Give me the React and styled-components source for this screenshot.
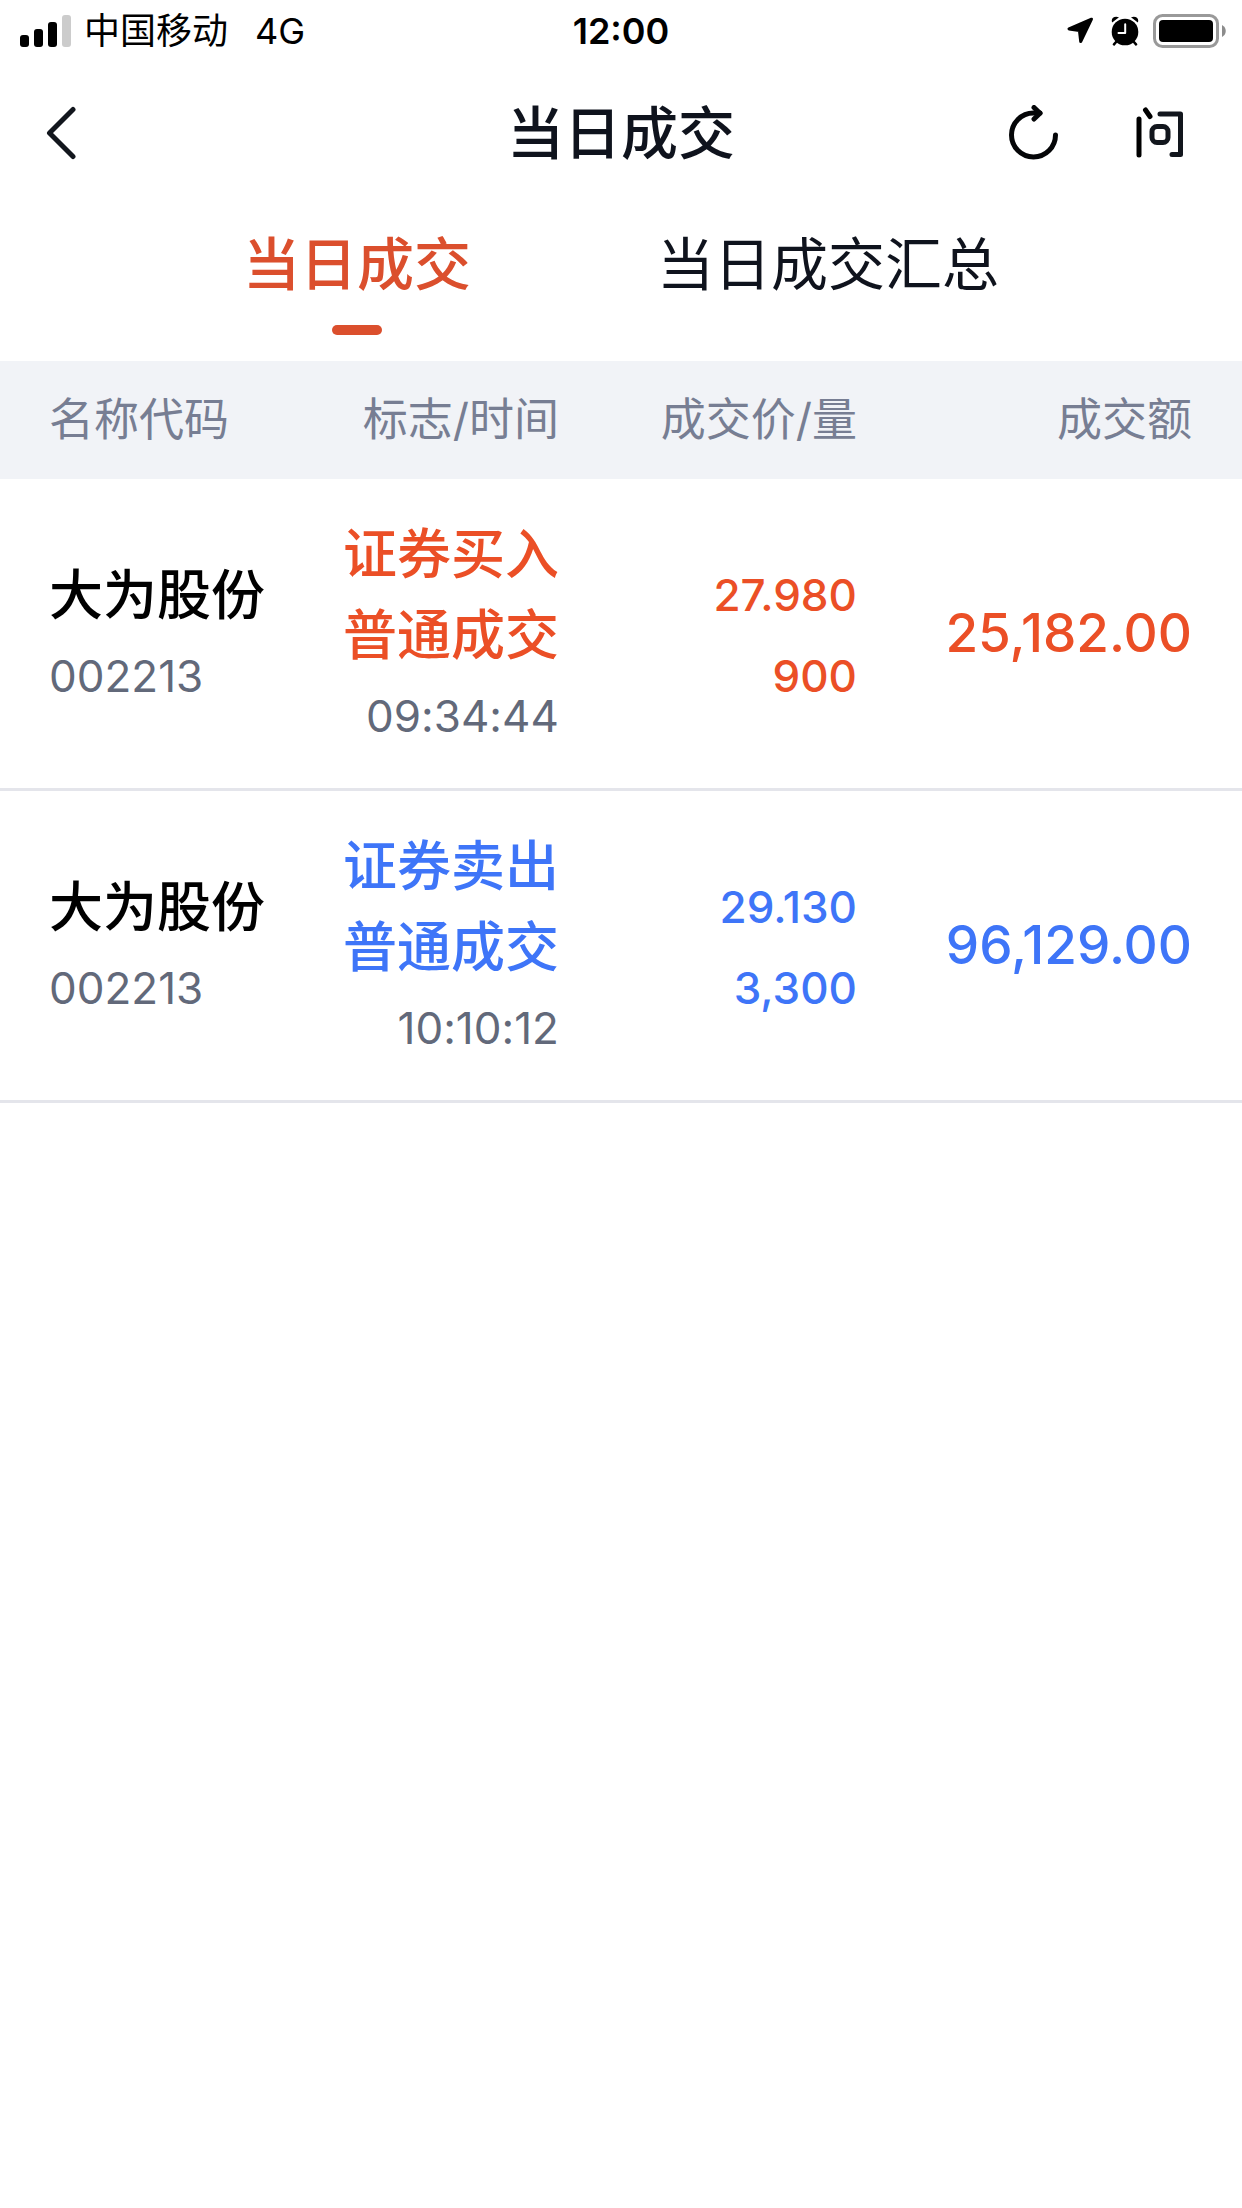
import React from "react";
import styled, { createGlobalStyle } from "styled-components";

const GlobalStyle = createGlobalStyle`
  *, *::before, *::after { box-sizing: border-box; }
  body {
    margin: 0;
    background: #fff;
    color: #0f131d;
    font-family: Inter, "Noto Sans CJK SC", sans-serif;
  }
  button {
    margin: 0;
    padding: 0;
    border: 0;
    background: none;
    color: inherit;
    font: inherit;
    cursor: pointer;
  }
  svg { display: block; }
`;

const Page = styled.div`
  min-height: 100vh;
  background: #fff;
`;

const StatusBar = styled.div`
  display: grid;
  grid-template-columns: 1fr auto 1fr;
  align-items: center;
  height: 62px;
  padding: 0 16px;
  color: #000;
  font-size: 36px;
  line-height: 62px;
`;

const StatusGroup = styled.div`
  display: flex;
  align-items: center;
  justify-content: ${(p) => (p.$end ? "flex-end" : "flex-start")};
  gap: 13px;
  padding-left: 4px;
`;

const Network = styled.span`
  margin-left: 14px;
`;

const Clock = styled.time`
  font-weight: 600;
`;

const TitleBar = styled.header`
  display: grid;
  grid-template-columns: 1fr auto 1fr;
  align-items: center;
  height: 142px;
  padding: 0 46px;
`;

const Title = styled.h1`
  margin: 0;
  padding-top: 2px;
  font-size: 57px;
  font-weight: 500;
  line-height: 84px;
`;

const Actions = styled.div`
  display: flex;
  justify-content: ${(p) => (p.$end ? "flex-end" : "flex-start")};
  gap: 77px;
  padding-right: 12px;
`;

const Tabs = styled.div`
  display: flex;
  justify-content: center;
  gap: 186px;
  padding: 19px 0 26px;
`;

const Tab = styled.button`
  display: flex;
  flex-direction: column;
  align-items: center;
  gap: 18px;
  font-size: 57px;
  line-height: 84px;
  font-weight: ${(p) => (p.$active ? 500 : 400)};
  color: ${(p) => (p.$active ? "#db4f2d" : "#0f131d")};

  &::after {
    content: "";
    width: 50px;
    height: 10px;
    border-radius: 5px;
    background: ${(p) => (p.$active ? "#db4f2d" : "transparent")};
  }
`;

const TradeTable = styled.table`
  width: 100%;
  table-layout: fixed;
  border-collapse: collapse;
  font-variant-ligatures: no-contextual;
`;

const Col = styled.col`
  width: ${(p) => p.$width};
`;

const HeadCell = styled.th`
  height: 118px;
  padding: 0;
  background: #f1f3f7;
  color: #777e93;
  font-size: 45px;
  font-weight: 400;
  line-height: 68px;
  text-align: right;

  &:first-child { padding-left: 49px; text-align: left; }
  &:last-child { padding-right: 50px; }
`;

const Cell = styled.td`
  padding: 35px 0 31px;
  border-bottom: 3px solid #e4e5eb;
  color: ${(p) => p.$color || "#000"};
  text-align: right;
  vertical-align: middle;

  &:first-child { padding-left: 49px; text-align: left; }
  &:last-child { padding: 33px 50px 33px 0; }
`;

const Line = styled.div`
  font-size: 54px;
  font-weight: 500;
  line-height: 81px;
  white-space: nowrap;
`;

const Figure = styled(Line)`
  font-size: 44px;
  ${(p) => p.$muted && "color: #62697a; font-weight: 400;"}
`;

const Amount = styled(Line)`
  font-size: 53px;
`;

const SignalIcon = () => (
  <svg width="51" height="32" viewBox="0 0 51 32" aria-hidden="true">
    <rect x="0" y="20" width="9" height="12" rx="3" />
    <rect x="14" y="14" width="9" height="18" rx="3" />
    <rect x="28" y="7" width="9" height="25" rx="3" />
    <rect x="42" y="0" width="9" height="32" rx="3" fill="#ccc" />
  </svg>
);

const LocationIcon = () => (
  <svg width="28" height="28" viewBox="0 0 28 28" aria-hidden="true">
    <path
      d="M25.5 2.2 3 11.9 13.4 13.4 14.7 24.6Z"
      stroke="#000"
      strokeWidth="3"
      strokeLinejoin="round"
    />
  </svg>
);

const AlarmIcon = () => (
  <svg width="33" height="30" viewBox="-4 0 33 30" aria-hidden="true">
    <circle cx="14" cy="16" r="13.3" />
    <path d="M1.2 6.4C-.6 2.6 3.4-.8 8 1.3ZM26.8 6.4C28.6 2.6 24.6-.8 20 1.3Z" />
    <path d="M5.5 25.5 3 28.4M22.5 25.5 25 28.4" stroke="#000" strokeWidth="2.5" strokeLinecap="round" />
    <path d="M14.2 8.3V17H7.5" fill="none" stroke="#fff" strokeWidth="2" strokeLinecap="round" strokeLinejoin="round" />
  </svg>
);

const BatteryIcon = () => (
  <svg width="73" height="34" viewBox="0 0 73 34" aria-hidden="true">
    <rect x="1.5" y="1.5" width="63" height="31" rx="8" fill="none" stroke="#999" strokeWidth="3" />
    <rect x="6" y="6" width="54" height="22" rx="4" />
    <path d="M69 11C74 13.5 74 20.5 69 23Z" fill="#8c8c8c" />
  </svg>
);

const BackIcon = () => (
  <svg width="30" height="54" viewBox="0 0 30 54" fill="none" stroke="#12161d" strokeWidth="5" strokeLinecap="round" strokeLinejoin="round">
    <path d="M27 3.500 3.500 27 27 50.500" />
  </svg>
);

const RefreshIcon = () => (
  <svg width="50" height="56" viewBox="0 0 50 56" fill="none" stroke="#050608" strokeWidth="5" strokeLinecap="round" strokeLinejoin="round">
    <path d="M46.500 30A22 22 0 1 1 24.500 8H31" />
    <path d="M25 2.500 31 8.300 25 14" />
  </svg>
);

const AskIcon = () => (
  <svg width="48" height="56" viewBox="0 0 48 56" fill="none" stroke="#12161d" strokeWidth="5" strokeLinecap="round" strokeLinejoin="round">
    <path d="M3 14V50M9.500 5 14 11.500" stroke="#000" />
    <path d="M24 9H44.500V49.500H36" />
    <rect x="16" y="21.500" width="16" height="16" rx="5" />
  </svg>
);

const HEADINGS = ["名称代码", "标志/时间", "成交价/量", "成交额"];

const TRADES = [
  {
    name: "大为股份",
    code: "002213",
    side: "证券买入",
    kind: "普通成交",
    time: "09:34:44",
    price: "27.980",
    volume: "900",
    amount: "25,182.00",
    color: "#eb4f26",
  },
  {
    name: "大为股份",
    code: "002213",
    side: "证券卖出",
    kind: "普通成交",
    time: "10:10:12",
    price: "29.130",
    volume: "3,300",
    amount: "96,129.00",
    color: "#3e75f8",
  },
];

const TABS = ["当日成交", "当日成交汇总"];

export default function App() {
  const [active, setActive] = React.useState(0);

  return (
    <Page>
      <GlobalStyle />
      <StatusBar>
        <StatusGroup>
          <SignalIcon />
          <span>中国移动</span>
          <Network>4G</Network>
        </StatusGroup>
        <Clock>12:00</Clock>
        <StatusGroup $end>
          <LocationIcon />
          <AlarmIcon />
          <BatteryIcon />
        </StatusGroup>
      </StatusBar>

      <TitleBar>
        <Actions>
          <button type="button" aria-label="返回">
            <BackIcon />
          </button>
        </Actions>
        <Title>当日成交</Title>
        <Actions $end>
          <button type="button" aria-label="刷新">
            <RefreshIcon />
          </button>
          <button type="button" aria-label="问">
            <AskIcon />
          </button>
        </Actions>
      </TitleBar>

      <Tabs role="tablist">
        {TABS.map((label, i) => (
          <Tab
            key={label}
            type="button"
            role="tab"
            aria-selected={active === i}
            $active={active === i}
            onClick={() => setActive(i)}
          >
            {label}
          </Tab>
        ))}
      </Tabs>

      <TradeTable>
        <colgroup>
          <Col $width="24%" />
          <Col $width="21%" />
          <Col $width="24%" />
          <Col $width="31%" />
        </colgroup>
        <thead>
          <tr>
            {HEADINGS.map((h) => (
              <HeadCell key={h} scope="col">{h}</HeadCell>
            ))}
          </tr>
        </thead>
        <tbody>
          {TRADES.map((t) => (
            <tr key={t.time}>
              <Cell>
                <Line>{t.name}</Line>
                <Figure $muted>{t.code}</Figure>
              </Cell>
              <Cell $color={t.color}>
                <Line>{t.side}</Line>
                <Line>{t.kind}</Line>
                <Figure $muted>{t.time}</Figure>
              </Cell>
              <Cell $color={t.color}>
                <Figure>{t.price}</Figure>
                <Figure>{t.volume}</Figure>
              </Cell>
              <Cell $color={t.color}>
                <Amount>{t.amount}</Amount>
              </Cell>
            </tr>
          ))}
        </tbody>
      </TradeTable>
    </Page>
  );
}
